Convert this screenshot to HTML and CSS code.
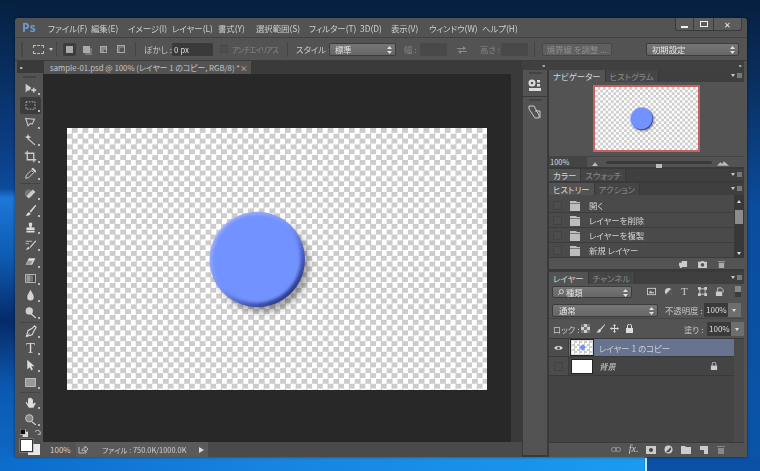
FILE: index.html
```html
<!DOCTYPE html>
<html lang="ja">
<head>
<meta charset="utf-8">
<title>Photoshop</title>
<link rel="stylesheet" href="styles.css">
</head>
<body>
<svg class="defs" width="0" height="0">
  <defs>
    <linearGradient id="bevel" x1="0.15" y1="0.1" x2="0.85" y2="0.9">
      <stop offset="0" stop-color="#a4b5fb"/><stop offset="0.5" stop-color="#7590f5"/><stop offset="0.75" stop-color="#4a5fc0"/><stop offset="1" stop-color="#2a3684"/>
    </linearGradient>
    <filter id="soft" x="-20%" y="-20%" width="140%" height="140%"><feGaussianBlur stdDeviation="1.4"/></filter>
    <filter id="shade" x="-30%" y="-30%" width="160%" height="160%"><feGaussianBlur stdDeviation="3.6"/></filter>
    <symbol id="ball" viewBox="0 0 420 262">
      <circle cx="195" cy="137" r="47" fill="#000" opacity=".36" filter="url(#shade)"/>
      <circle cx="190.3" cy="131.5" r="47.7" fill="url(#bevel)"/>
      <circle cx="189.5" cy="130.7" r="44.2" fill="#7292ff" filter="url(#soft)"/>
    </symbol>
    <symbol id="folder" viewBox="0 0 10 11"><path d="M0 1h6l1 1h3v9H0z" fill="#bdbdbd"/><path d="M0 3h10v1H0z" fill="#777"/></symbol>
    <symbol id="updown" viewBox="0 0 5 8"><path d="M2.5 0 5 3H0zM2.5 8 0 5h5z" fill="#e0e0e0"/></symbol>
  </defs>
</svg>
<div class="window">
  <header class="menubar">
    <span class="logo">Ps</span>
    <nav class="menus">
      <span class="m1">ファイル(F)</span><span class="m2">編集(E)</span><span class="m3">イメージ(I)</span><span class="m4">レイヤー(L)</span><span class="m5">書式(Y)</span><span class="m6">選択範囲(S)</span><span class="m7">フィルター(T)</span><span class="m8">3D(D)</span><span class="m9">表示(V)</span><span class="m10">ウィンドウ(W)</span><span class="m11">ヘルプ(H)</span>
    </nav>
    <div class="winctl">
      <span class="wc wc-min"><i class="min"></i></span><span class="wc wc-max"><i class="max"></i></span><span class="wc wc-close">✕</span>
    </div>
  </header>
  <div class="options">
    <span class="grip-v"></span>
    <span class="marquee-opt"></span>
    <span class="mini-arrow"></span>
    <span class="sep s1"></span>
    <span class="mode active"><i class="sq"></i></span>
    <span class="mode"><i class="sq2"></i></span>
    <span class="mode"><i class="sq3"></i></span>
    <span class="mode"><i class="sq4"></i></span>
    <span class="sep s2"></span>
    <span class="lbl l-feather">ぼかし :</span>
    <span class="field f-feather">0 px</span>
    <span class="check"></span>
    <span class="lbl dim l-anti">アンチエイリアス</span>
    <span class="sep s3"></span>
    <span class="lbl l-style">スタイル :</span>
    <span class="select s-style">標準<svg class="ud"><use href="#updown"/></svg></span>
    <span class="lbl dim l-w">幅 :</span>
    <span class="field blank f-w"></span>
    <svg class="swap" viewBox="0 0 10 9"><path d="M0 3h6V1l3 2.5L6 5V4H0zM10 6H4V5L1 6.5 4 9V7h6z" fill="#8a8a8a"/></svg>
    <span class="lbl dim l-h">高さ :</span>
    <span class="field blank f-h"></span>
    <span class="sep s4"></span>
    <span class="btn-dim">境界線 を調整 ...</span>
    <span class="select s-preset">初期設定<svg class="ud"><use href="#updown"/></svg></span>
  </div>
  <div class="workspace">
    <aside class="toolcol">
      <div class="strip"><span class="dbl">▸▸</span></div>
      <div class="toolgrip"></div>
      <div class="tool"><svg viewBox="0 0 16 16"><path d="M2 2v11l3-3 1 1 3-4zM11 7h2v2h2v2h-2v2h-2v-2H9V9h2z" fill="#ccc"/></svg></div>
      <div class="tool on"><svg viewBox="0 0 16 16"><rect x="2.5" y="3.5" width="11" height="9" fill="none" stroke="#ccc" stroke-dasharray="2 1.5"/></svg></div>
      <div class="tool"><svg viewBox="0 0 16 16"><path d="M2 3l11 1-3 6-2-1-3 3z" fill="none" stroke="#ccc" stroke-width="1.3"/></svg></div>
      <div class="tool"><svg viewBox="0 0 16 16"><path d="M6 7l8 7-1 1-8-7z" fill="#ccc"/><path d="M5 1l1 3 3 1-3 1-1 3-1-3-3-1 3-1z" fill="#ddd"/></svg></div>
      <div class="tool"><svg viewBox="0 0 16 16"><path d="M4 1v11h11M1 4h11v11" fill="none" stroke="#ccc" stroke-width="1.6"/></svg></div>
      <div class="tool"><svg viewBox="0 0 16 16"><path d="M2 14l1-4 6-6 3 3-6 6z" fill="none" stroke="#ccc" stroke-width="1.2"/><path d="M9 2l2-1 4 4-1 2z" fill="#ddd"/></svg></div>
      <div class="toolsep"></div>
      <div class="tool"><svg viewBox="0 0 16 16"><circle cx="6" cy="8" r="5" fill="#777"/><path d="M3 11l8-8 3 3-8 8z" fill="#ccc"/></svg></div>
      <div class="tool"><svg viewBox="0 0 16 16"><path d="M14 1L7 9l1.500 1.500L15 2zM6 10c-2 0-2 3-4 4 3 1 6 0 6-2.500z" fill="#ddd"/></svg></div>
      <div class="tool"><svg viewBox="0 0 16 16"><path d="M6 2h4v3L9 8h4v3H3V8h4L6 5zM3 12h10v2H3z" fill="#ddd"/></svg></div>
      <div class="tool"><svg viewBox="0 0 16 16"><path d="M14 3l-7 8 1 1 7-8zM5 11c-1 1-1 2-3 3 2 .5 5 0 5-2z" fill="#ddd"/><path d="M2 4h8M2 7l4 0" stroke="#bbb" stroke-width="1.200"/></svg></div>
      <div class="tool"><svg viewBox="0 0 16 16"><path d="M6 4h8L10 12H2z" fill="#ddd"/><path d="M2 12l3-5h6l-3 5z" fill="#999"/></svg></div>
      <div class="tool"><svg viewBox="0 0 16 16"><rect x="2" y="3" width="12" height="10" fill="#444" stroke="#ccc"/><rect x="3" y="4" width="5" height="8" fill="#999"/><rect x="8" y="4" width="3" height="8" fill="#777"/></svg></div>
      <div class="tool"><svg viewBox="0 0 16 16"><path d="M8 1c2 4 4 6 4 9a4 4 0 0 1-8 0c0-3 2-5 4-9z" fill="#d4d4d4"/></svg></div>
      <div class="tool"><svg viewBox="0 0 16 16"><circle cx="6.500" cy="6" r="4.500" fill="#d0d0d0"/><path d="M9 9l6 5-1 1-6-5z" fill="#ddd"/></svg></div>
      <div class="toolsep"></div>
      <div class="tool"><svg viewBox="0 0 16 16"><path d="M13 1l2 2-2 3-3 6-7 2 2-7 5-3z" fill="none" stroke="#ddd" stroke-width="1.300"/><path d="M3 14l4-4" stroke="#ddd"/></svg></div>
      <div class="tool"><span class="tt">T</span></div>
      <div class="tool"><svg viewBox="0 0 16 16"><path d="M4 1v12l3-3 2 4 2-1-2-4h4z" fill="#ddd"/></svg></div>
      <div class="tool"><svg viewBox="0 0 16 16"><rect x="2" y="3" width="12" height="10" fill="#999" stroke="#ccc"/></svg></div>
      <div class="toolsep"></div>
      <div class="tool"><svg viewBox="0 0 16 16"><path d="M3 7l2 3V3h1.500v4V2H8v5V2.500h1.500V7V4H11v6l2-2 1.500 1-3 5.500H6L2 8z" fill="#ddd"/></svg></div>
      <div class="tool"><svg viewBox="0 0 16 16"><circle cx="6.500" cy="6.500" r="4.500" fill="#888" stroke="#ccc" stroke-width="1.200"/><path d="M10 10l5 4-1 1-5-4z" fill="#ddd"/></svg></div>
      <div class="swatches">
        <div class="swrow"><svg class="dc" viewBox="0 0 9 9"><rect x="3" y="3" width="6" height="6" fill="#ddd"/><rect width="6" height="6" fill="#111" stroke="#ccc" stroke-width=".8"/></svg><svg class="sw-arrow" viewBox="0 0 9 9"><path d="M1 3c2-2 4-2 6 0M7 3v3H4" fill="none" stroke="#ccc"/></svg></div>
        <div class="bigsw"><span class="bg"></span><span class="fg"></span></div>
      </div>
    </aside>
    <main class="center">
      <div class="tabbar"><div class="doctab"><span>sample-01.psd @ 100% (レイヤー 1 のコピー, RGB/8) *</span><span class="x">×</span></div></div>
      <div class="docrow">
        <div class="canvas">
          <div class="checker big"><svg class="ballsvg"><use href="#ball"/></svg></div>
        </div>
        <div class="vscroll"></div>
      </div>
      <div class="status">
        <span class="st-zoom">100%</span>
        <div class="st-cell">
          <svg class="st-ico" viewBox="0 0 10 9"><path d="M1 2v6h7V6M4 6c0-2 1-3 3-3V1l3 3-3 3V5C6 5 5 5 4 6z" fill="none" stroke="#bbb"/></svg>
          <span class="st-file">ファイル : 750.0K/1000.0K</span>
          <span class="st-arrow"></span>
        </div>
      </div>
    </main>
    <aside class="dock">
      <div class="dockstrip"><span class="dl">◂◂</span><span class="dr">▸▸</span></div>
      <div class="dockbody">
        <div class="iconcol">
          <div class="ic-group g1"><i class="ig"></i><svg viewBox="0 0 14 14"><circle cx="4" cy="5" r="3.500" fill="#ddd"/><circle cx="4" cy="5" r="1.300" fill="#555"/><rect x="9" y="2" width="3" height="2.500" fill="#ddd"/><rect x="9" y="6" width="3" height="2.500" fill="#ddd"/><rect x="1" y="10" width="12" height="3" fill="#ddd"/></svg></div>
          <div class="ic-group"><i class="ig"></i><svg viewBox="0 0 14 14"><path d="M1 1h5l5 9v3H7L1 4zM7 6h5v7" fill="none" stroke="#ccc"/></svg></div>
        </div>
        <div class="panels">
          <section class="nav">
            <div class="tabs"><span class="tab on">ナビゲーター</span><span class="tab">ヒストグラム</span><span class="pmenu"></span></div>
            <div class="nav-body"><div class="nav-frame"><div class="checker small"><svg class="ballsmall"><use href="#ball"/></svg></div></div></div>
            <div class="zoomrow">
              <span class="zoomval">100%</span>
              <svg class="mnt m-s" viewBox="0 0 8 5"><path d="M0 5l4-5 4 5z" fill="#bbb"/></svg>
              <span class="track"><i class="knob"></i></span>
              <svg class="mnt m-l" viewBox="0 0 14 5"><path d="M0 5l4-4 2 2 2-3 6 5z" fill="#bbb"/></svg>
            </div>
          </section>
          <section class="collapsed">
            <div class="tabs"><span class="tab on">カラー</span><span class="tab">スウォッチ</span><span class="pmenu"></span></div>
          </section>
          <section class="history">
            <div class="tabs"><span class="tab on">ヒストリー</span><span class="tab">アクション</span><span class="pmenu"></span></div>
            <div class="hist-body">
              <ul class="hist-list">
                <li><i class="cb"></i><svg class="fld"><use href="#folder"/></svg><span>開く</span></li>
                <li><i class="cb"></i><svg class="fld"><use href="#folder"/></svg><span>レイヤーを削除</span></li>
                <li><i class="cb"></i><svg class="fld"><use href="#folder"/></svg><span>レイヤーを複製</span></li>
                <li><i class="cb"></i><svg class="fld"><use href="#folder"/></svg><span>新規 レイヤー</span></li>
              </ul>
              <div class="hist-scroll"><i class="up"></i><i class="thumb"></i><i class="down"></i></div>
            </div>
            <div class="pfoot hist-foot">
              <svg viewBox="0 0 10 9"><path d="M3 1h6v7H3zM0 3h3v2h2v2H3v2H1V7H0z" fill="#ccc"/></svg>
              <svg viewBox="0 0 10 9"><path d="M0 2h3l1-1h2l1 1h3v7H0z" fill="#ccc"/><circle cx="5" cy="5.500" r="2" fill="#555"/></svg>
              <svg viewBox="0 0 10 9"><path d="M1 1h8v1H1zM2 3h6v6H2z" fill="#aaa"/></svg>
            </div>
          </section>
          <section class="layers">
            <div class="tabs"><span class="tab on">レイヤー</span><span class="tab">チャンネル</span><span class="pmenu"></span></div>
            <div class="lrow r-filter">
              <span class="select s-kind"><svg class="lens" viewBox="0 0 8 8"><circle cx="5" cy="3" r="2.300" fill="none" stroke="#ddd"/><path d="M3 5L1 7" stroke="#ddd"/></svg>種類<svg class="ud"><use href="#updown"/></svg></span>
              <span class="fi fi1"><svg viewBox="0 0 10 10"><rect x=".5" y="1.500" width="9" height="7" fill="none" stroke="#ccc"/><path d="M2 7l2-3 2 2 1-1 1 2z" fill="#ccc"/></svg></span>
              <span class="fi"><svg viewBox="0 0 10 10"><circle cx="5" cy="5" r="4" fill="#ccc"/><path d="M8 2L2 8a4 4 0 0 0 6-6z" fill="#555"/></svg></span>
              <span class="fi ft">T</span>
              <span class="fi"><svg viewBox="0 0 10 10"><path d="M2 2h6v6H2z" fill="none" stroke="#ccc"/><path d="M0 0h3v3H0zM7 0h3v3H7zM0 7h3v3H0zM7 7h3v3H7z" fill="#ccc"/></svg></span>
              <span class="fi"><svg viewBox="0 0 10 10"><path d="M1 5h7v5H1z" fill="#ccc"/><path d="M3 5V1h4l2 2v3" fill="none" stroke="#ccc"/></svg></span>
              <span class="toggle"></span>
            </div>
            <div class="lrow r-blend">
              <span class="select s-blend">通常<svg class="ud"><use href="#updown"/></svg></span>
              <span class="lbl2 l-op">不透明度 :</span>
              <span class="numfield">100%</span><span class="numbtn"></span>
            </div>
            <div class="lrow r-lock">
              <span class="lbl2 l-lock">ロック :</span>
              <svg class="li li1" viewBox="0 0 9 9"><rect width="9" height="9" fill="#ccc"/><path d="M0 0h3v3H0zM6 0h3v3H6zM3 3h3v3H3zM0 6h3v3H0zM6 6h3v3H6z" fill="#777"/></svg>
              <svg class="li li2" viewBox="0 0 9 9"><path d="M9 0L4 5l1 1 4-5zM3 5C2 6 2 8 0 8c2 1 5 1 5-2z" fill="#ddd"/></svg>
              <svg class="li li3" viewBox="0 0 9 9"><path d="M4.500 0l1.500 2H5v2h2V3l2 1.500L7 6V5H5v2h1L4.500 9 3 7h1V5H2v1L0 4.500 2 3v1h2V2H3z" fill="#ddd"/></svg>
              <svg class="li li4" viewBox="0 0 9 9"><path d="M1 4h7v5H1z" fill="#ddd"/><path d="M2.500 4V2a2 2 0 0 1 4 0v2" fill="none" stroke="#ddd"/></svg>
              <span class="lbl2 l-fill">塗り :</span>
              <span class="numfield">100%</span><span class="numbtn"></span>
            </div>
            <div class="layer-area">
              <ul class="layer-list">
                <li class="layer sel">
                  <span class="vis"><svg viewBox="0 0 10 7"><path d="M0 3.500C2 .5 8 .5 10 3.500 8 6.500 2 6.500 0 3.500z" fill="#e0e0e0"/><circle cx="5" cy="3.500" r="1.800" fill="#555"/></svg></span>
                  <span class="thumb-l t-copy"><span class="checker tiny"><i class="dot"></i></span></span>
                  <span class="lname">レイヤー 1 のコピー</span>
                </li>
                <li class="layer">
                  <span class="vis"><i class="cb"></i></span>
                  <span class="thumb-l t-bg"></span>
                  <span class="lname it">背景</span>
                  <svg class="bglock" viewBox="0 0 9 9"><path d="M1 4h7v5H1z" fill="#ccc"/><path d="M2.500 4V2a2 2 0 0 1 4 0v2" fill="none" stroke="#ccc"/></svg>
                </li>
              </ul>
              <div class="layer-scroll"></div>
            </div>
            <div class="pfoot layer-foot">
              <svg class="faint" viewBox="0 0 10 9"><rect x=".5" y="2.500" width="5" height="4" rx="2" fill="none" stroke="#999"/><rect x="4.500" y="2.500" width="5" height="4" rx="2" fill="none" stroke="#999"/></svg>
              <span class="fx">fx.</span>
              <svg viewBox="0 0 10 9"><rect y="1" width="10" height="8" fill="#ccc"/><circle cx="5" cy="5" r="2" fill="#444"/></svg>
              <svg viewBox="0 0 10 9"><circle cx="4.500" cy="4.500" r="4" fill="#ccc"/><path d="M7 2L2 7a4 4 0 0 0 5-5z" fill="#444"/></svg>
              <svg viewBox="0 0 10 9"><path d="M0 1h4l1 1h5v7H0z" fill="#ccc"/></svg>
              <svg viewBox="0 0 10 9"><path d="M1 1h8v8H5V5H1z" fill="#ccc"/></svg>
              <svg viewBox="0 0 10 9"><path d="M1 1h8v1H1zM2 3h6v6H2z" fill="#888"/></svg>
            </div>
          </section>
        </div>
      </div>
    </aside>
  </div>
</div>
<span class="glow"></span>
</body>
</html>
```

FILE: styles.css
```css
* { box-sizing: border-box; }
html, body { margin: 0; padding: 0; }
body {
  width: 760px; height: 471px; overflow: hidden; position: relative;
  font-family: "Noto Sans CJK JP", "Noto Sans", sans-serif; font-size: 8px; color: #ccc;
  font-feature-settings: "palt";
  background:
    linear-gradient(90deg, #0c6ccb 0, #1784df 35%, #1a9bf0 84.7%, #0a50a4 85.2%, #0a50a4 100%) left bottom / 100% 14px no-repeat,
    linear-gradient(180deg, #06203f 0%, #0b3c80 30%, #0d4a9a 40%, #1c78d8 42%, #0d5ab0 55%, #062a68 68%, #0a3a80 73%, #0a58b0 82%, #0f6cc8 100%) left top / 16px 100% no-repeat,
    linear-gradient(180deg, #071f3f 0%, #0a3266 20%, #0a4d9f 45%, #0a55a8 100%);
}
.defs { position: absolute; }
ul { list-style: none; margin: 0; padding: 0; }
i { display: block; font-style: normal; }
.glow { position: absolute; left: 645px; top: 458px; width: 2px; height: 13px; background: #bfe6ff; }
.window {
  position: absolute; left: 15px; top: 18px; width: 732px; height: 439px;
  background: #535353; border-radius: 3px 3px 0 0; display: flex; flex-direction: column;
  box-shadow: 0 0 3px rgba(0,0,0,.5); filter: blur(.3px);
}
.menubar { height: 20px; flex: none; display: flex; align-items: center; position: relative; border-bottom: 1px solid #424242; }
.logo { font: bold 12px "Open Sans", sans-serif; color: #6b9bd0; margin-left: 7px; width: 26px; letter-spacing: .3px; }
.menus { display: flex; font-size: 8.4px; color: #cfcfcf; white-space: nowrap; }
.menus span { display: block; }
.m1 { width: 43px; } .m2 { width: 37px; } .m3 { width: 44px; } .m4 { width: 46px; } .m5 { width: 38px; }
.m6 { width: 53px; } .m7 { width: 51px; } .m8 { width: 31px; } .m9 { width: 38px; } .m10 { width: 53px; }
.winctl { position: absolute; left: 660px; top: 0; width: 67px; height: 13px; display: flex; border: 1px solid #3a3a3a; border-top: 0; border-radius: 0 0 3px 3px; background: #5c5c5c; }
.wc { display: flex; align-items: center; justify-content: center; border-right: 1px solid #3a3a3a; color: #eee; font-size: 8px; }
.wc-min { width: 18px; } .wc-max { width: 20px; } .wc-close { flex: 1; border: 0; }
.min { width: 7px; height: 2px; background: #eee; margin-top: 5px; }
.max { width: 8px; height: 6px; border: 1.500px solid #eee; }
.options { height: 23px; flex: none; display: flex; align-items: center; border-bottom: 1px solid #3c3c3c; white-space: nowrap; }
.grip-v { width: 2px; height: 15px; margin-left: 6px; background: #464646; }
.marquee-opt { width: 11px; height: 9px; border: 1px dashed #bbb; margin-left: 10px; }
.mini-arrow { border: 2px solid transparent; border-top: 3px solid #ccc; margin: 3px 0 0 5px; }
.sep { width: 1px; height: 15px; background: #444; }
.s1 { margin-left: 3px; } .s2 { margin-left: 8px; } .s3 { margin-left: 9px; } .s4 { margin-left: 6px; }
.mode { width: 13px; height: 13px; margin-left: 6px; display: flex; align-items: center; justify-content: center; }
.mode.active { background: #3c3c3c; border-radius: 2px; }
.mode + .mode { margin-left: 4px; }
.sq { width: 7px; height: 7px; background: #aaa; }
.sq2 { width: 7px; height: 7px; background: #aaa; box-shadow: 2px 2px 0 #777; }
.sq3 { width: 7px; height: 7px; border: 1px solid #aaa; box-shadow: inset 3px 3px 0 #888; }
.sq4 { width: 8px; height: 8px; border: 1px solid #aaa; box-shadow: inset 2px 2px 0 #777; }
.lbl { color: #c8c8c8; font-size: 8.4px; }
.lbl.dim { color: #858585; }
.l-feather { margin-left: 8px; width: 28px; }
.field { height: 13px; background: #3a3a3a; border-radius: 1px; line-height: 13px; padding-left: 2px; font-size: 8px; color: #ddd; }
.f-feather { width: 41px; }
.check { width: 8px; height: 8px; background: #4e4e4e; border: 1px solid #484848; margin-left: 7px; }
.l-anti { margin-left: 4px; width: 46px; font-size: 7.5px; letter-spacing: -1px; }
.l-style { margin-left: 8px; width: 33px; }
.select { height: 13px; background: linear-gradient(#767676, #666); border: 1px solid #3c3c3c; border-radius: 2px; line-height: 11px; padding-left: 5px; color: #e4e4e4; font-size: 8.4px; position: relative; display: block; }
.ud { position: absolute; right: 3px; top: 2px; width: 5px; height: 8px; }
.s-style { width: 67px; }
.l-w { margin-left: 8px; width: 16px; }
.blank { background: #494949; }
.f-w { width: 27px; }
.swap { width: 10px; height: 9px; margin-left: 10px; }
.l-h { margin-left: 13px; width: 21px; }
.f-h { width: 27px; }
.btn-dim { width: 70px; height: 13px; margin-left: 7px; background: #5f5f5f; border: 1px solid #484848; border-radius: 2px; color: #8f8f8f; font-size: 8.4px; line-height: 11px; text-align: center; }
.s-preset { width: 93px; margin-left: 34px; }
.workspace { flex: 1; display: flex; min-height: 0; }
.toolcol { width: 28px; flex: none; display: flex; flex-direction: column; padding-left: 3px; }
.strip { height: 12px; background: #3a3a3a; color: #ccc; font-size: 4px; line-height: 12px; padding-left: 3px; margin-left: -1px; flex: none; }
.dbl { letter-spacing: -1px; }
.toolgrip { width: 13px; height: 2px; background: #444; margin: 3px 0 2px 5px; flex: none; }
.tool { height: 17px; flex: none; display: flex; align-items: center; justify-content: center; position: relative; width: 25px; }
.tool::after { content: ""; position: absolute; right: 3px; bottom: 2px; width: 2px; height: 2px; background: #bbb; }
.tool svg { width: 13px; height: 13px; }
.tool.on { background: #3c3c3c; width: 21px; margin-left: 2px; border-radius: 2px; }
.tool.on::after { right: 1px; }
.tt { font: 14px "Liberation Serif", serif; color: #ddd; line-height: 1; }
.toolsep { height: 1px; background: #444; margin: 1px 2px .5px; flex: none; width: 21px; }
.swatches { display: flex; flex-direction: column; margin-top: 1px; }
.swrow { display: flex; height: 9px; align-items: center; padding-left: 2px; gap: 6px; flex: none; }
.dc, .sw-arrow { width: 8px; height: 8px; }
.bigsw { position: relative; height: 17px; }
.bg { position: absolute; left: 10px; top: 6px; width: 12px; height: 11px; background: #e8e8e8; }
.fg { position: absolute; left: 2px; top: 1px; width: 13px; height: 13px; background: #fff; border: 1px solid #333; box-shadow: 0 0 0 .5px #999; }
.center { width: 479px; flex: none; display: flex; flex-direction: column; }
.tabbar { height: 13px; flex: none; background: #3a3a3a; padding-left: 1px; }
.doctab { width: 207px; height: 13px; background: #535353; color: #c4c4c4; font-size: 7.8px; line-height: 13px; padding: 0 4px 0 6px; white-space: nowrap; display: flex; justify-content: space-between; }
.docrow { flex: 1; display: flex; min-height: 0; }
.canvas { width: 468px; background: #282828; padding: 54px 0 0 24px; }
.vscroll { flex: 1; background: #3a3a3a; }
.checker { display: block; position: relative; background: conic-gradient(#ccc 25%, #fff 0 50%, #ccc 0 75%, #fff 0); }
.big { width: 420px; height: 262px; background-size: 10.67px 10.67px; }
.ballsvg { width: 420px; height: 262px; display: block; }
.status { height: 15px; flex: none; display: flex; align-items: center; background: #4a4a4a; font-size: 8px; color: #cfcfcf; }
.st-zoom { width: 33px; padding-left: 7px; background: #535353; height: 15px; line-height: 15px; flex: none; }
.st-cell { width: 132px; height: 15px; flex: none; background: #5a5a5a; display: flex; align-items: center; }
.st-ico { width: 10px; height: 9px; margin-left: 2px; }
.st-file { margin-left: 14px; width: 90px; white-space: nowrap; font-size: 7.4px; }
.st-arrow { border: 3px solid transparent; border-left: 5px solid #ddd; margin-left: 7px; }
.dock { flex: 1; display: flex; flex-direction: column; background: #3a3a3a; border-right: 3px solid #535353; }
.dockstrip { height: 9px; flex: none; display: flex; justify-content: space-between; font-size: 4px; line-height: 9px; padding: 0 3px 0 20px; color: #bbb; letter-spacing: -1px; background: #404040; }
.dockbody { flex: 1; display: flex; min-height: 0; }
.iconcol { width: 27px; flex: none; padding-left: 1px; padding-right: 2px; display: flex; flex-direction: column; }
.ic-group { background: #535353; height: 26px; margin-bottom: 1px; display: flex; flex-direction: column; align-items: center; flex: none; }
.ic-group + .ic-group { flex: 1; margin-bottom: 2px; }
.ig { width: 13px; height: 2px; background: #444; margin: 2px 0 4px; flex: none; }
.ic-group svg { width: 14px; height: 14px; flex: none; }
.panels { width: 195px; flex: none; display: flex; flex-direction: column; }
.tabs { height: 12px; flex: none; display: flex; background: #3f3f3f; position: relative; font-size: 8.4px; color: #8c8c8c; line-height: 12px; }
.tab { padding: 0 4px; background: #454545; border-right: 1px solid #383838; }
.tab.on { background: #535353; color: #d6d6d6; }
.pmenu { position: absolute; right: 2px; top: 3px; width: 5px; height: 5px; background: #777; }
.pmenu::before { content: ""; position: absolute; left: -6px; top: 1px; border: 2px solid transparent; border-top: 3px solid #ccc; }
.nav { height: 97px; flex: none; display: flex; flex-direction: column; background: #535353; }
.nav-body { height: 74px; flex: none; padding: 3px 0 0 44px; }
.nav-frame { width: 107px; height: 67px; border: 2px solid #c76060; }
.small { width: 103px; height: 63px; background-size: 5.3px 5.3px; }
.ballsmall { width: 103px; height: 63px; display: block; }
.zoomrow { height: 11px; flex: none; display: flex; align-items: center; border-top: 1px solid #444; }
.zoomval { width: 38px; height: 10px; background: #444; font-size: 7.5px; line-height: 10px; padding-left: 1px; color: #ddd; }
.mnt { flex: none; }
.m-s { width: 6px; height: 4px; margin: 3px 0 0 5px; }
.track { width: 106px; height: 3px; margin-left: 8px; background: #3a3a3a; position: relative; border-radius: 2px; }
.knob { position: absolute; left: 50px; top: 3px; width: 6px; height: 4px; background: #bbb; }
.m-l { width: 12px; height: 5px; margin: 3px 0 0 5px; }
.collapsed { height: 12px; flex: none; margin: 2px 0 0; }
.history { margin-top: 2px; height: 86px; flex: none; display: flex; flex-direction: column; background: #535353; }
.hist-body { height: 63px; flex: none; display: flex; background: #4a4a4a; }
.hist-list { flex: 1; padding-top: 3px; font-size: 8.4px; color: #d4d4d4; }
.hist-list li { height: 15px; display: flex; align-items: center; border-bottom: 1px solid #3c3c3c; }
.cb { width: 9px; height: 9px; background: #4c4c4c; border: 1px solid #424242; flex: none; }
.hist-list .cb { margin-left: 4px; }
.fld { width: 10px; height: 11px; margin: 0 9px 0 8px; flex: none; }
.hist-scroll { width: 10px; background: #383838; position: relative; flex: none; }
.hist-scroll .up { position: absolute; left: 3px; top: 3px; border: 2px solid transparent; border-bottom: 3px solid #ddd; }
.hist-scroll .thumb { position: absolute; left: 1px; top: 15px; width: 8px; height: 14px; background: #8c8c8c; }
.hist-scroll .down { position: absolute; left: 3px; bottom: 1px; border: 2px solid transparent; border-top: 3px solid #ddd; }
.pfoot { height: 11px; display: flex; align-items: center; justify-content: flex-end; flex: none; background: #535353; }
.hist-foot { gap: 10px; padding-right: 18px; }
.hist-foot svg { width: 9px; height: 8px; }
.layers { flex: 1; margin-top: 3px; display: flex; flex-direction: column; background: #535353; min-height: 0; }
.lrow { display: flex; align-items: center; flex: none; }
.r-filter { height: 18px; padding: 2px 0 0 3px; align-items: flex-start; }
.s-kind { width: 80px; height: 12px; padding-left: 4px; display: flex; align-items: center; gap: 2px; }
.fi { width: 9px; height: 9px; margin-left: 8px; display: block; margin-top: 1px; }
.fi1 { margin-left: 15px; }
.fi svg { width: 9px; height: 9px; display: block; }
.lens { width: 7px; height: 7px; }
.ft { font: 11px/9px "Liberation Serif", serif; color: #ccc; }
.toggle { width: 6px; height: 11px; margin-left: 11px; background: linear-gradient(#888 50%, #3c3c3c 50%); }
.r-blend { height: 17px; padding: 0 0 0 3px; border-bottom: 1px solid #454545; }
.s-blend { width: 106px; padding-left: 6px; }
.lbl2 { font-size: 8.4px; color: #c8c8c8; white-space: nowrap; }
.l-op { margin-left: 7px; width: 39px; }
.numfield { width: 24px; height: 14px; background: #3a3a3a; font-size: 8px; line-height: 14px; padding-left: 2px; color: #ddd; }
.numbtn { width: 13px; height: 14px; background: #6e6e6e; position: relative; }
.numbtn::after { content: ""; position: absolute; left: 4px; top: 6px; border: 2px solid transparent; border-top: 3px solid #ddd; }
.r-lock { height: 20px; padding-left: 4px; border-bottom: 1px solid #3a3a3a; }
.l-lock { width: 28px; }
.li { width: 9px; height: 9px; margin-right: 5.5px; }
.l-fill { margin-left: 45px; width: 23px; }
.layer-area { flex: 1; display: flex; min-height: 0; background: #444; border-bottom: 1px solid #3a3a3a; }
.layer-list { flex: 1; }
.layer { height: 19px; display: flex; align-items: center; border-bottom: 1px solid #393939; position: relative; font-size: 8.4px; color: #d0d0d0; }
.layer.sel { height: 18px; background: #66748f; }
.vis { width: 20px; height: 100%; display: flex; align-items: center; justify-content: center; background: #4c4c4c; border-right: 1px solid #3c3c3c; flex: none; margin-right: 2px; }
.vis svg { width: 9px; height: 6px; }
.thumb-l { width: 22px; height: 15px; flex: none; }
.t-copy { border: 1px solid #ddd; outline: 1px solid #222; }
.tiny { width: 20px; height: 13px; background-size: 5px 5px; }
.dot { position: absolute; left: 8px; top: 4px; width: 5px; height: 5px; border-radius: 50%; background: #7090ff; }
.t-bg { background: #fff; border: 1px solid #222; }
.lname { margin-left: 6px; white-space: nowrap; }
.it { font-style: italic; }
.bglock { position: absolute; right: 16px; top: 5px; width: 8px; height: 8px; }
.layer-scroll { width: 10px; background: #4a4a4a; flex: none; }
.layer-foot { height: 12px; gap: 7.5px; padding-right: 18px; margin-bottom: 2px; }
.layer-foot svg { width: 10px; height: 9px; }
.fx { font: italic 10px/10px "Liberation Serif", serif; color: #ccc; }
```
